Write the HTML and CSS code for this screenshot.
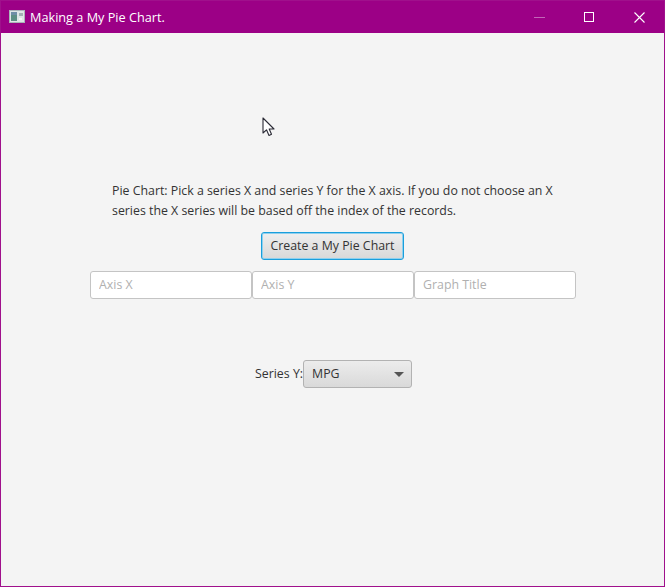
FILE: index.html
```html
<!DOCTYPE html>
<html lang="en">
<head>
<meta charset="utf-8">
<title>Making a My Pie Chart.</title>
<link rel="stylesheet" href="styles.css">
</head>
<body>
<div class="window">
  <header class="titlebar">
    <svg class="app-icon" width="16" height="14" viewBox="0 0 16 14">
      <rect x="0.5" y="0.5" width="15" height="12" fill="#dfe6e6" stroke="#aab4b8"/>
      <rect x="2" y="2" width="6" height="9" fill="#5d8f84"/>
      <rect x="2" y="2" width="6" height="3" fill="#6f8ea6"/>
      <rect x="10" y="3" width="4" height="3" fill="#a3b0b4"/>
      <rect x="10" y="8" width="3" height="2" fill="#f4f6f6"/>
    </svg>
    <span class="title">Making a My Pie Chart.</span>
    <div class="controls">
      <span class="ctrl"><svg width="11" height="11" viewBox="0 0 11 11"><path d="M0 5.500H11" stroke="#c266b8" stroke-width="1"/></svg></span>
      <span class="ctrl"><svg width="11" height="11" viewBox="0 0 11 11"><rect x="0.500" y="0.500" width="9" height="9" fill="none" stroke="#fff"/></svg></span>
      <span class="ctrl"><svg width="11" height="11" viewBox="0 0 11 11"><path d="M0.500 0.500L10.500 10.500M10.500 0.500L0.500 10.500" stroke="#fff" stroke-width="1.100"/></svg></span>
    </div>
  </header>
  <main class="content">
    <svg class="cursor" width="14" height="20" viewBox="0 0 14 20">
      <path d="M1 1V16L4.500 12.800L7 18.500L9.500 17.300L7.200 12H12Z" fill="#fff" stroke="#2a2a35" stroke-width="1.100" stroke-linejoin="round"/>
    </svg>
    <p class="intro">Pie Chart: Pick a series X and series Y for the X axis. If you do not choose an X series the X series will be based off the index of the records.</p>
    <button class="primary" type="button">Create a My Pie Chart</button>
    <div class="fields">
      <input class="field" type="text" placeholder="Axis X">
      <input class="field" type="text" placeholder="Axis Y">
      <input class="field" type="text" placeholder="Graph Title">
    </div>
    <div class="series">
      <span class="series-label">Series Y:</span>
      <div class="select">
        <span>MPG</span>
        <i class="arrow"></i>
      </div>
    </div>
  </main>
</div>
</body>
</html>
```
FILE: styles.css
```css
* { box-sizing: border-box; }
html, body { margin: 0; padding: 0; }
body {
  width: 665px;
  height: 587px;
  overflow: hidden;
  font-family: "Open Sans", "Noto Sans", sans-serif;
  font-size: 12.35px;
  color: #333;
}
.window {
  width: 665px;
  height: 587px;
  border: 1px solid #a0108c;
  background: #f4f4f4;
  display: flex;
  flex-direction: column;
}
.titlebar {
  height: 32px;
  flex: none;
  background: #9c0086;
  color: #fff;
  display: flex;
  align-items: center;
  padding-left: 8px;
}
.app-icon { margin-right: 5px; }
.title { font-size: 12.7px; }
.controls { margin-left: auto; display: flex; }
.ctrl {
  width: 50px;
  height: 32px;
  display: flex;
  align-items: center;
  justify-content: center;
}
.content {
  position: relative;
  flex: 1;
  display: flex;
  flex-direction: column;
  align-items: flex-start;
  padding-top: 148px;
}
.cursor { position: absolute; left: 261px; top: 84px; }
.intro {
  margin: 0 0 11px 111px;
  width: 450px;
  line-height: 20px;
}
.primary {
  margin-left: 260px;
  width: 143px;
  height: 28px;
  padding: 0 0 2px;
  font: inherit;
  color: #333;
  border: 1px solid #1a9fdc;
  border-radius: 3px;
  box-shadow: inset 0 0 0 1px #8fd0ee;
  background: linear-gradient(#efefef, #d8d8d8);
}
.fields { display: flex; margin: 11px 0 0 89px; }
.field {
  width: 162px;
  height: 28px;
  padding: 0 8px 2px;
  font: inherit;
  border: 1px solid #c4c4c4;
  border-radius: 3px;
  background: #fff;
  outline: none;
}
.field::placeholder { color: #b0b0b0; opacity: 1; }
.series {
  display: flex;
  align-items: center;
  margin: 61px 0 0 254px;
}
.series-label { padding-bottom: 2px; }
.select {
  width: 109px;
  height: 28px;
  padding: 0 7px 2px 8px;
  display: flex;
  align-items: center;
  justify-content: space-between;
  border: 1px solid #b2b2b2;
  border-radius: 3px;
  background: linear-gradient(#ececec, #d9d9d9);
}
.arrow {
  width: 0;
  height: 0;
  margin-top: 2px;
  border-left: 5px solid transparent;
  border-right: 5px solid transparent;
  border-top: 5px solid #555;
}
```
